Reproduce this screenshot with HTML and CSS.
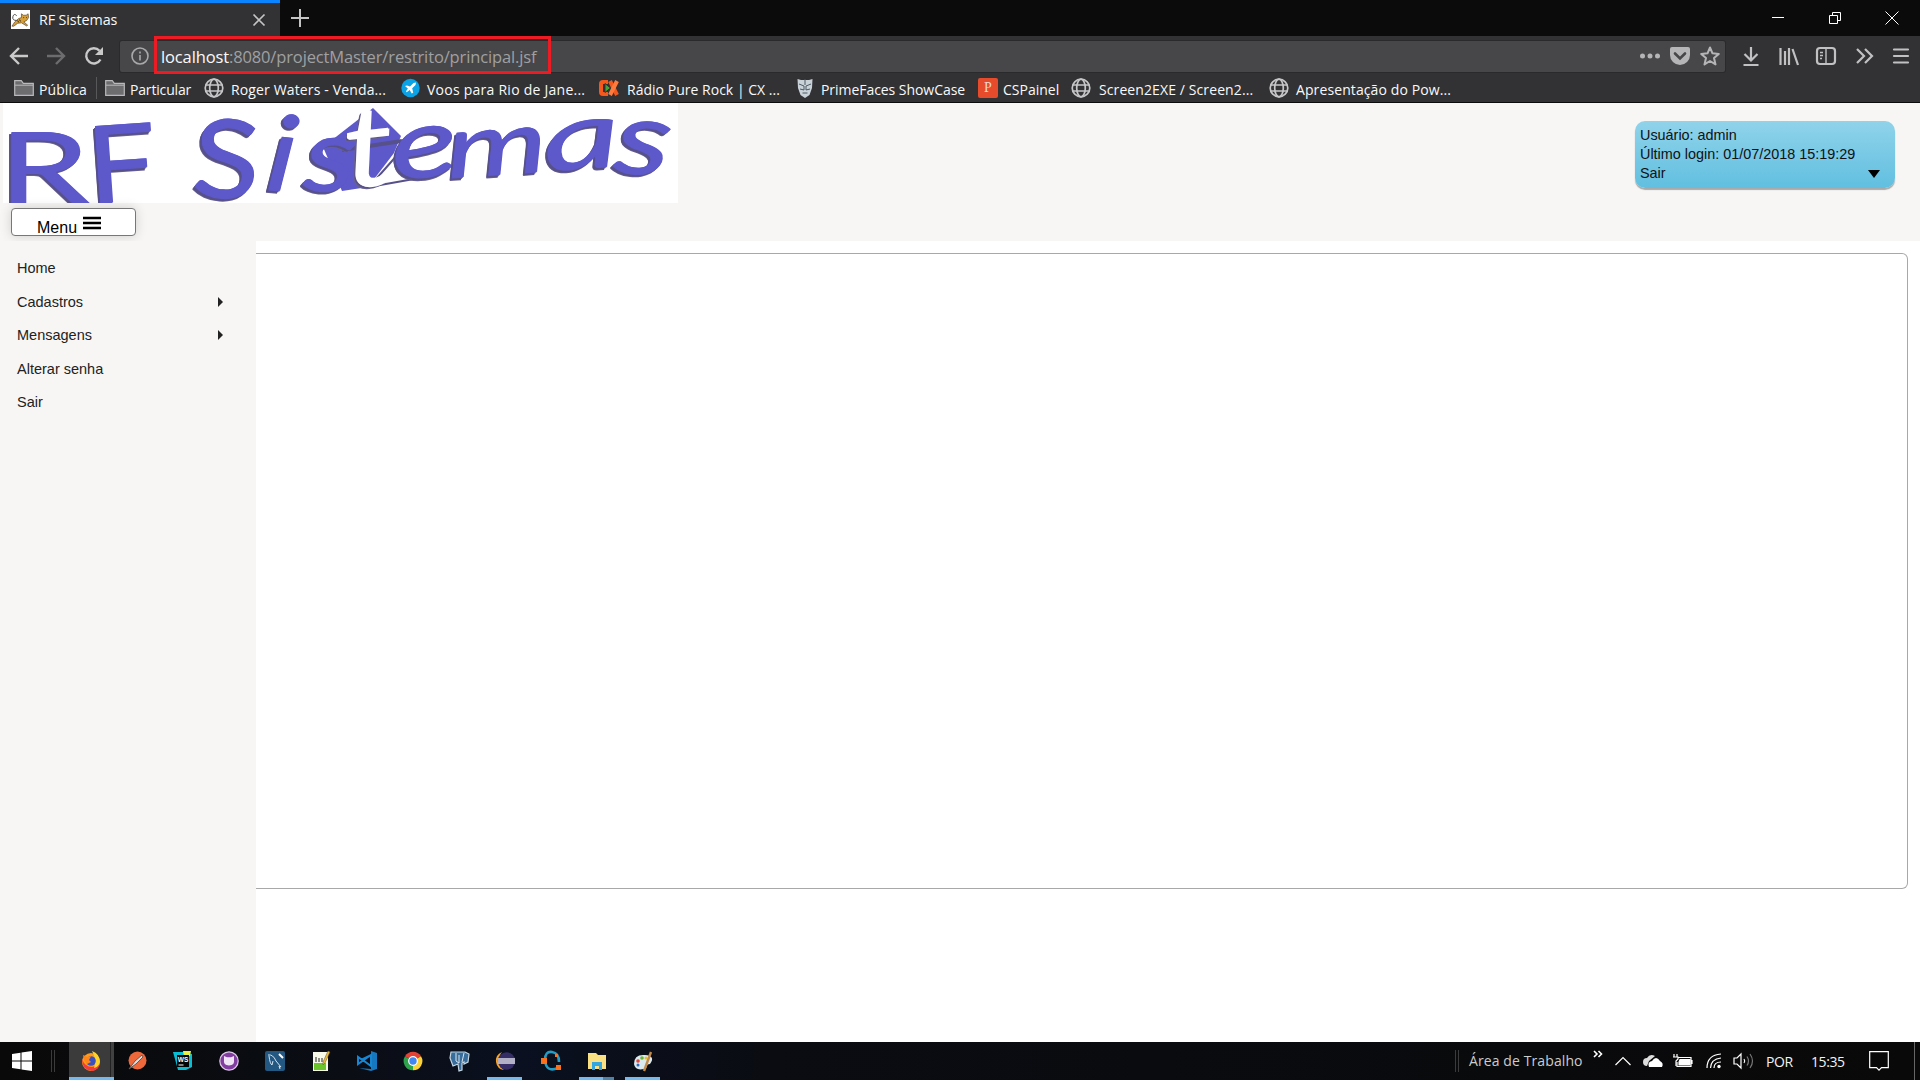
FILE: index.html
```html
<!DOCTYPE html>
<html lang="pt-BR">
<head>
<meta charset="utf-8">
<title>RF Sistemas</title>
<link rel="stylesheet" href="styles.css">
</head>
<body>
<svg class="defs" width="0" height="0" aria-hidden="true">
  <symbol id="globe" viewBox="0 0 20 20"><g fill="none" stroke="#c6c6c8" stroke-width="1.7"><circle cx="10" cy="10" r="8.8"/><ellipse cx="10" cy="10" rx="4.3" ry="8.8"/><path d="M1.5 7h17M1.5 13h17"/></g></symbol>
  <symbol id="folder" viewBox="0 0 20 20"><path d="M.7 17.3V2.7h6.6l2 2.6h10v12z" fill="#6d6d70" stroke="#b9b9bb" stroke-width="1.2"/><path d="M1 7.2h18" stroke="#b9b9bb"/></symbol>
</svg>

<header class="tabs">
  <div class="tab">
    <svg class="favicon" viewBox="0 0 20 20"><path fill="#fff" d="M0 0h20v20H0z"/><path d="M11 4l2 1.500h3L18 4l.5 4-2 3-3 1.500 4 3.500-1 .8-5.500-3.300-4 .5L3 17H1l3-4.500L8 9l3-1z" fill="#d6a03c" stroke="#5c4422" stroke-width=".7"/><path d="M6 11Q1 11 2 7t4-1" stroke="#444" fill="none"/><path d="M13 8h.8m2 0h.8M9 10l1 2m-3-1l1 2" stroke="#2b2116" fill="none"/></svg>
    <span class="tab-title">RF Sistemas</span>
    <svg class="tab-close" viewBox="0 0 14 14"><path d="M1.500 1.500l11 11m0-11l-11 11"/></svg>
  </div>
  <svg class="new-tab" viewBox="0 0 18 18"><path d="M9 0v18M0 9h18"/></svg>
  <div class="window-buttons">
    <svg viewBox="0 0 14 14"><path d="M1 6.500h12"/></svg>
    <svg viewBox="0 0 14 14"><path d="M1.500 4.500h8v8h-8zM4.500 4V1.500h8v8H10"/></svg>
    <svg viewBox="0 0 14 14"><path d="M.5 .5l13 13m0-13l-13 13"/></svg>
  </div>
</header>

<nav class="toolbar">
  <svg class="nav-icon" viewBox="0 0 20 20"><path d="M19 10H2m8-8l-8 8 8 8"/></svg>
  <svg class="nav-icon dim" viewBox="0 0 20 20"><path d="M1 10h17m-8-8l8 8-8 8"/></svg>
  <svg class="nav-icon reload" viewBox="0 0 20 20"><path d="M16.500 13.500A7.600 7.600 0 1 1 15.500 4.800"/><path class="solid" d="M19 1v8h-8z"/></svg>
  <div class="urlbar">
    <svg class="info" viewBox="0 0 18 18"><circle cx="9" cy="9" r="8"/><path d="M9 8v5.500M9 4.500v2"/></svg>
    <div class="address"><span class="host">localhost</span>:8080/projectMaster/restrito/principal.jsf</div>
    <div class="url-actions">
      <svg viewBox="0 0 20 20"><g fill="#b5b5b7"><circle cx="2.500" cy="10" r="2.500"/><circle cx="10" cy="10" r="2.500"/><circle cx="17.500" cy="10" r="2.500"/></g></svg>
      <svg viewBox="0 0 20 20"><path fill="#b5b5b7" d="M2 1h16q2 0 2 2v6a10 10 0 0 1-20 0V3q0-2 2-2z"/><path d="M5 7.500l5 5 5-5" fill="none" stroke="#474749" stroke-width="2.600" stroke-linecap="round"/></svg>
      <svg viewBox="0 0 20 20"><path d="M10 1.500l2.500 5.800 6.300.6-4.800 4.200 1.500 6.300L10 15l-5.500 3.400L6 12.100 1.200 7.900l6.300-.6z" fill="none" stroke="#b5b5b7" stroke-width="2" stroke-linejoin="round"/></svg>
    </div>
  </div>
  <div class="tools">
    <svg viewBox="0 0 20 20"><path d="M10 1v13M3.500 8l6.500 6.500L16.500 8M2.500 19h15"/></svg>
    <svg viewBox="0 0 20 20"><path d="M1.500 2v17M6 5v14M10 2v17M13.500 3l5.500 16" /></svg>
    <svg viewBox="0 0 20 20"><rect x="1" y="2" width="18" height="16" rx="3"/><path d="M10 2v16M4 6.500h3M4 9.500h3M4 12.500h2" stroke-width="1.400"/></svg>
    <svg viewBox="0 0 20 20"><path d="M3 3l7 7-7 7M11 3l7 7-7 7"/></svg>
    <svg viewBox="0 0 20 20"><path d="M3 3.500h14M3 10h14M3 16.500h14" stroke-linecap="round"/></svg>
  </div>
</nav>

<nav class="bookmarks">
  <a class="bm publica"><svg viewBox="0 0 20 20"><use href="#folder"/></svg><span>Pública</span></a>
  <a class="bm particular"><svg viewBox="0 0 20 20"><use href="#folder"/></svg><span>Particular</span></a>
  <a class="bm roger"><svg viewBox="0 0 20 20"><use href="#globe"/></svg><span>Roger Waters - Venda...</span></a>
  <a class="bm voos"><svg viewBox="0 0 20 20"><circle cx="9.500" cy="10" r="9.200" fill="#0ba3e6"/><path d="M4 8l2-.5 3 1L12.500 5l2.500-.5-.5 2.500-3.300 3.300 1 4.500-1.500.7-2-3.500-3 2.200-.8-.8 2-3z" fill="#fff"/></svg><span>Voos para Rio de Jane...</span></a>
  <a class="bm radio"><svg viewBox="0 0 20 20"><path d="M9 4H4Q2 4 2 6v8q0 2 2 2h5" fill="none" stroke="#f4581c" stroke-width="4"/><path d="M11 3l7 14" stroke="#f4581c" stroke-width="4"/><path d="M18 3l-7 14" stroke="#ff7a3c" stroke-width="4"/><path d="M6 5.500l5.500 4.500L6 14.500z" fill="#47a332" stroke="#323234"/></svg><span>Rádio Pure Rock | CX ...</span></a>
  <a class="bm prime"><svg viewBox="0 0 20 20"><path d="M1.500 1l3.500 1h8l3.500-1-.5 9-2.500 7-4.500 3-4.500-3L2 10z" fill="#c9d2d9"/><path d="M3 6l5 2v4L4 11m11-5l-5 2v4l4-1M9 1v6M6.500 15h5" stroke="#4b5963" fill="none"/></svg><span>PrimeFaces ShowCase</span></a>
  <a class="bm painel"><b class="p-icon">P</b><span>CSPainel</span></a>
  <a class="bm screen"><svg viewBox="0 0 20 20"><use href="#globe"/></svg><span>Screen2EXE / Screen2...</span></a>
  <a class="bm apres"><svg viewBox="0 0 20 20"><use href="#globe"/></svg><span>Apresentação do Pow...</span></a>
</nav>

<div class="page">
  <header class="page-header">
    <div class="brand">
      <svg class="logo" viewBox="0 0 675 100" role="img" aria-label="RF Sistemas">
        <path d="M370 5l28 28-7 17-26 34-26 4-19-44z" fill="#5d59cb"/>
        <path d="M396 50L366 84l45-8" fill="none" stroke="#57518a" stroke-width="2"/>
        <path d="M339 47l60-9" stroke="#57518a" stroke-width="4"/>
        <g class="logo-text">
          <text class="upright" transform="translate(-5 100) scale(1.48 1)" font-size="99">R</text>
          <text class="upright" transform="translate(86 101) rotate(-4) scale(1.15 1)" font-size="108">F</text>
          <text class="upright" transform="translate(187 92) rotate(4) scale(1.14 1)" font-size="109">S</text>
          <text transform="translate(261 86) rotate(6) scale(1.2 1)" font-size="106">i</text>
          <text transform="translate(299 86) rotate(4) scale(1.25 1)" font-size="104">s</text>
          <text class="cross" transform="translate(344 85) rotate(-6) scale(1.25 1)" font-size="112">t</text>
          <text transform="translate(390 76) rotate(-4) scale(1.42 1)" font-size="98">e</text>
          <text transform="translate(445 75) rotate(-4) scale(1.46 1)" font-size="88">m</text>
          <text transform="translate(542 68) rotate(-4) scale(1.6 1)" font-size="94">a</text>
          <text transform="translate(609 68) rotate(6) scale(1.36 1)" font-size="104">s</text>
        </g>
      </svg>
      <button class="menu-button"><span>Menu</span><svg viewBox="0 0 18 14"><path d="M0 2h18M0 7h18M0 12h18"/></svg></button>
    </div>
    <div class="user-box">
      <div>Usuário: admin</div>
      <div>Último login: 01/07/2018 15:19:29</div>
      <div class="user-exit">Sair <i class="caret"></i></div>
    </div>
  </header>
  <div class="body">
    <aside class="sidebar">
      <a>Home</a>
      <a>Cadastros<i class="sub"></i></a>
      <a>Mensagens<i class="sub"></i></a>
      <a>Alterar senha</a>
      <a>Sair</a>
    </aside>
    <main class="main"><section class="panel"></section></main>
  </div>
</div>

<footer class="taskbar">
  <svg class="start" viewBox="0 0 20 20"><path fill="#fff" d="M0 3l8.500-1.200v7.700H0zM9.500 1.600L20 0v9.500H9.500zM0 10.500h8.500v7.700L0 17zM9.500 10.500H20V20L9.500 18.400z"/></svg>
  <i class="grip"></i>
  <div class="apps">
    <div class="app active"><svg viewBox="0 0 20 20"><circle cx="10" cy="11" r="9" fill="#ff9b18"/><path d="M1 8q0 11 10 12 8-1 8-10-2 5-8 6-7 0-10-8z" fill="#f23b3e"/><path d="M11 0q8 3 8 11-1 5-6 6 3-8-2-17z" fill="#ffd32e"/><circle cx="10" cy="10" r="4.800" fill="#3a51bd"/><path d="M2 4l4 2 4-1-2 4 2 2-4 2-3-4z" fill="#ff861b"/></svg></div>
    <div class="app"><svg viewBox="0 0 20 20"><circle cx="10.500" cy="9.500" r="9" fill="#ef683c"/><path d="M2 18l6-8 7-6 1 2-7 7z" fill="#ddd" stroke="#70564d"/></svg></div>
    <div class="app"><svg viewBox="0 0 20 20"><path d="M0 1h10l9 2v13l-6 3H5z" fill="#08bed5"/><path d="M10 0h8l-1 5h-6z" fill="#eaf146"/><path d="M4 4h12v12H4z" fill="#050505"/><text x="4.800" y="10.500" font-size="6.500" font-weight="700" fill="#fff" font-family="Liberation Sans" stroke="none">WS</text><path d="M5.500 14h5" stroke="#fff"/></svg></div>
    <div class="app"><svg viewBox="0 0 20 20"><circle cx="10" cy="10" r="9.200" fill="#823da0" stroke="#dcc9e5" stroke-width="1.200"/><path d="M5 5l3 1.300h4L15 5v4q1 5-5 5.500Q4 14 5 9z" fill="#efe4f4"/></svg></div>
    <div class="app"><svg viewBox="0 0 20 20"><rect width="20" height="20" rx="2" fill="#235883"/><path d="M3 4q5-1 8 6l5 6-2-1 1 3M4 5q1 8 3 9l1-4" fill="none" stroke="#d5e4ef"/><path d="M14 3l4 4" stroke="#fff" stroke-width="2"/></svg></div>
    <div class="app"><svg viewBox="0 0 20 20"><path d="M2 1h15v19H2z" fill="#f7f9e9"/><path d="M3 12h12v7H3z" fill="#6cc52c"/><path d="M5 6v5m3-4v4m3-4v4" stroke="#222"/><path d="M19 1l-5 11-2 2 0-3 5-11z" fill="#e6bd39" stroke="#704c24" stroke-width=".5"/></svg></div>
    <div class="app"><svg viewBox="0 0 20 20"><path d="M14 0l6 2v16l-6 2L2 17l12 1z" fill="#1678be"/><path d="M1 6v7l5-3.500zM14 4v11L5 8.500zM1 13l13-9" fill="none" stroke="#1787d3" stroke-width="2"/></svg></div>
    <div class="app"><svg viewBox="0 0 20 20"><path d="M10 10L2 5.300a9.200 9.200 0 0 1 16 0z" fill="#e44234"/><path d="M10 10l8-4.700a9.200 9.200 0 0 1-8 14z" fill="#fbd338"/><path d="M10 10v9.300A9.200 9.200 0 0 1 2 5.300z" fill="#2da34c"/><circle cx="10" cy="10" r="4.300" fill="#4287f1" stroke="#fff" stroke-width="1.200"/></svg></div>
    <div class="app"><svg viewBox="0 0 20 20"><path d="M2 1l7 0 7 0 4 2-1 8-4 2v-2l-2 1v7l-3 1-1-7-5 2L1 7z" fill="#376c9b" stroke="#c6d6e2" stroke-width="1.200"/><path d="M7 2v8l3 2V4m5-2l-2 9" stroke="#dde7ee" fill="none"/></svg></div>
    <div class="app open"><svg viewBox="0 0 20 20"><path d="M7 1Q0 4 1 11t8 8Q4 16 4 10T7 1z" fill="#f6a42c"/><circle cx="11.500" cy="10" r="8.700" fill="#352d65"/><path d="M3 8h17M3 10h17M3 12h17" stroke="#dcdbe8" stroke-width="1.400"/></svg></div>
    <div class="app"><svg viewBox="0 0 20 20"><path d="M4 9Q4 0 11 1t7 10m-1 6Q5 22 4 9" fill="none" stroke="#239cc6" stroke-width="2.600"/><path d="M0 7h6v6H0zM14 3h3v3h-3zM15 14h5v5h-5z" fill="#fa711d"/></svg></div>
    <div class="app open multi"><svg viewBox="0 0 20 20"><path d="M1 2h8l2 2h8v14H1z" fill="#fbdf83"/><path d="M5 19v-8h10v8h-3v-4H8v4z" fill="#33a5df"/></svg></div>
    <div class="app open"><svg viewBox="0 0 20 20"><path d="M1 13Q1 3 12 4t5 9q-3 0-3 2t-3 3q-9 2-10-5z" fill="#dce9ef"/><circle cx="5" cy="10" r="1.800" fill="#e2463a"/><circle cx="9" cy="7" r="1.800" fill="#66b52d"/><circle cx="5" cy="14" r="1.500" fill="#286fc4"/><circle cx="13" cy="7" r="1.500" fill="#e8bd28"/><path d="M18 1L11 20" stroke="#c18a4b" stroke-width="2.400"/></svg></div>
  </div>
  <div class="tray">
    <i class="grip"></i>
    <span class="desk">Área de Trabalho</span>
    <svg class="more" viewBox="0 0 10 8"><path d="M1 1l3 3-3 3M5.500 1l3 3-3 3"/></svg>
    <svg class="up" viewBox="0 0 16 10"><path d="M.5 9L8 1.500 15.500 9"/></svg>
    <svg class="cloud" viewBox="0 0 20 14"><path fill="#ddd" d="M4 12a4 4 0 0 1 0-8Q7-1 12 2l-6 5z"/><path fill="#fff" d="M6 13q-2-5 3-6 4-6 8 0 4 2 2 6z"/></svg>
    <svg class="battery" viewBox="0 0 20 14"><path d="M5 3.500h13v9H4V8M19 6v4" /><path d="M7 5.500h10v5.500H6V8z" fill="#fff"/><path d="M1 0v3m3-3v3M0 3h5v2l-2 2v5" /></svg>
    <svg class="wifi" viewBox="0 0 16 16"><path d="M1 15Q1 2 15 1M4.500 15Q5 6 15 5M8 15q0-6 7-6"/><circle cx="13" cy="13.500" r="1.700" fill="#fff" stroke="none"/></svg>
    <svg class="sound" viewBox="0 0 20 16"><path d="M1 5h3l4-4v14l-4-4H1zM11 6q1.500 2 0 4"/><path d="M14 3.500q3 4.500 0 9M17 1q5 7 0 14" opacity=".45"/></svg>
    <span class="lang">POR</span>
    <span class="clock">15:35</span>
    <svg class="action" viewBox="0 0 20 20"><path d="M.7.700h18.600v16H12.500L10 19.200 7.500 16.700H.7z"/></svg>
    <i class="peek"></i>
  </div>
</footer>
<div class="highlight"></div>
</body>
</html>
```
FILE: styles.css
```css
* { box-sizing: border-box; }
html, body { margin: 0; height: 100%; overflow: hidden; }
body { display: flex; flex-direction: column; background: #fff; font-family: "Open Sans", "Noto Sans", sans-serif; }
svg { display: block; flex: none; overflow: visible; }
.defs { position: absolute; }

/* Browser chrome */
.tabs { flex: none; height: 36px; display: flex; align-items: center; background: #0b0b0b; }
.tab { width: 280px; height: 36px; display: flex; align-items: center; border-top: 3px solid #0a84ff; background: #323234; padding: 0 14px 0 11px; }
.favicon { width: 19px; height: 19px; }
.tab-title { flex: 1; margin-left: 9px; color: #f9f9fa; font-size: 14.3px; letter-spacing: -.1px; }
.tab-close { width: 14px; height: 14px; fill: none; stroke: #c4c4c5; stroke-width: 1.7; }
.new-tab { width: 18px; height: 18px; margin-left: 11px; fill: none; stroke: #c4c4c5; stroke-width: 2; }
.window-buttons { margin-left: auto; display: flex; gap: 43px; padding-right: 21px; }
.window-buttons svg { width: 14px; height: 14px; fill: none; stroke: #fff; stroke-width: 1; }

.toolbar { flex: none; height: 38px; display: flex; align-items: center; background: #323234; padding: 2px 9px 0; }
.nav-icon { width: 20px; height: 20px; margin-right: 17px; fill: none; stroke: #c9c9ca; stroke-width: 2.4; }
.nav-icon.dim { stroke: #6c6c6e; margin-right: 18px; }
.nav-icon.reload { margin-right: 16px; }
.nav-icon .solid { fill: #c9c9ca; stroke: none; }
.urlbar { flex: none; width: 1605px; height: 31px; display: flex; align-items: center; background: #474749; border-radius: 2px; box-shadow: 0 0 0 1px #2a2a2c; padding: 0 5px 0 11px; }
.info { width: 18px; height: 18px; fill: none; stroke: #a9a9ab; stroke-width: 1.6; }
.address { flex: 1; margin-left: 12px; color: #a0a0a2; font-size: 16.5px; letter-spacing: -.13px; }
.host { color: #f9f9fa; }
.url-actions { display: flex; gap: 10px; }
.url-actions svg { width: 20px; height: 20px; }
.tools { display: flex; gap: 17.6px; margin-left: 16px; }
.tools svg { width: 20px; height: 20px; fill: none; stroke: #c1c1c3; stroke-width: 2.2; }

.bookmarks { flex: none; height: 29px; display: flex; align-items: center; background: #323234; border-bottom: 1px solid #0c0c0d; padding-left: 14px; color: #f9f9fa; font-size: 14px; }
.bm { display: flex; flex: none; align-items: center; gap: 6px; white-space: nowrap; height: 22px; }
.bm span { padding-top: 2px; }
.bm svg { width: 20px; height: 20px; }
.publica { width: 83px; gap: 5px; border-right: 1px solid #58585a; letter-spacing: .1px; }
.particular { width: 99px; margin-left: 8px; gap: 5px; letter-spacing: -.17px; }
.bm.roger { width: 197px; gap: 7px; letter-spacing: .14px; }
.bm.voos { width: 198px; letter-spacing: .25px; }
.bm.radio { width: 197px; gap: 8px; letter-spacing: .02px; }
.bm.prime { width: 182px; gap: 5px; letter-spacing: -.05px; }
.bm.painel { width: 93px; gap: 5px; letter-spacing: 0; }
.bm.screen { width: 198px; gap: 8px; letter-spacing: .1px; }
.bm.apres { gap: 7px; letter-spacing: .1px; }
.p-icon { width: 20px; height: 20px; background: #e64b2c; color: #f5d5ce; border-radius: 2px; font: 14px/20px "Liberation Serif", serif; text-align: center; }

/* Application page */
.page { flex: 1; min-height: 0; display: flex; flex-direction: column; font-family: "Liberation Sans", Arial, sans-serif; }
.page-header { flex: none; height: 138px; display: flex; justify-content: space-between; background: #f7f6f5; padding: 0 25px 0 3px; overflow: hidden; }
.logo { width: 675px; height: 100px; background: #fff; overflow: hidden; }
.logo-text { font-family: Lato, "Open Sans", sans-serif; font-weight: 400; font-style: italic; fill: #5d59cb; text-shadow: .6px 0 #5d59cb, 0 1px #5d59cb, -1px 2px #57518a, -2px 3px #57518a, -2px 4px #686292; }
.upright { font-style: normal; }
.cross { fill: #fff; text-shadow: 1px 1px #fff, -1px 2px #57518a, -2px 3px #686292; }
.menu-button { display: flex; align-items: flex-end; gap: 6px; width: 125px; height: 28px; margin: 5px 0 0 8px; padding: 0 0 0 25px; background: #fff; border: 1px solid #777; border-radius: 4px; box-shadow: 0 0 12px rgba(0,0,0,.16); font: 16px/16px "Liberation Sans", Arial, sans-serif; color: #000; }
.menu-button span { margin-bottom: -1px; }
.menu-button svg { width: 18px; height: 14px; margin-bottom: 5px; stroke: #000; stroke-width: 2.5; }
.user-box { width: 260px; height: 67px; margin-top: 18px; padding: 5px 5px 0; border-radius: 10px; background: linear-gradient(#90d3ea, #61bfe0); box-shadow: 0 2px 1px #aaa; font-size: 14.4px; line-height: 19px; color: #111; }
.user-exit { display: flex; justify-content: space-between; align-items: center; padding-right: 10px; }
.caret { border: 6.500px solid transparent; border-top: 8px solid #000; border-bottom: 0; }
.body { flex: 1; min-height: 0; display: flex; }
.sidebar { width: 256px; background: #f7f6f5; padding: 10.4px 33px 0 17px; }
.sidebar a { display: flex; align-items: center; justify-content: space-between; height: 33.5px; font-size: 14.5px; color: #222; }
.sub { border: 5px solid transparent; border-left: 5px solid #222; border-right: 0; }
.main { flex: 1; background: #fff; padding: 12px 12px 0 0; }
.panel { height: 636px; border: 1px solid #a8a8a8; border-left: 0; border-radius: 0 6px 6px 0; }

/* Desktop taskbar */
.taskbar { flex: none; height: 38px; display: flex; align-items: center; background: linear-gradient(90deg, #090909, #0a0d14 18%, #0a1020 27%, #0a0c12 40%, #090909); padding-left: 12px; }
.start { width: 20px; height: 20px; }
.grip { width: 4px; height: 22px; border: solid #3b3b3b; border-width: 0 1px; }
.start + .grip { margin-left: 19px; }
.apps { display: flex; margin-left: 14px; height: 38px; gap: 1px; }
.app { width: 45px; height: 38px; display: flex; align-items: center; justify-content: center; padding-right: 1px; }
.app svg { width: 20px; height: 20px; }
.app.active { background: linear-gradient(90deg, #3b3b3b 41px, #222 41px 42px, #414141 42px); box-shadow: inset 0 -3px #76b9ed; }
.app.open { background: linear-gradient(#76b9ed, #76b9ed) 4px bottom / 35px 3px no-repeat; }
.app.multi { background: linear-gradient(90deg, #76b9ed 24px, #5183a9 24px) 4px bottom / 35px 3px no-repeat; }
.tray { margin-left: auto; width: 465px; height: 38px; display: flex; align-items: center; color: #f2f2f2; font-size: 14px; }
.tray svg { fill: none; stroke: #fff; stroke-width: 1.2; }
.desk { width: 114px; margin-left: 10px; color: #ccc; letter-spacing: .1px; white-space: nowrap; padding-bottom: 1px; }
.tray .more { width: 10px; height: 8px; margin: -14px 0 0 10px; stroke-width: 1.6; }
.up { width: 16px; height: 10px; margin-left: 12px; }
.tray .cloud { width: 20px; height: 14px; margin-left: 12px; stroke: none; }
.battery { width: 20px; height: 14px; margin-left: 10px; }
.wifi { width: 16px; height: 16px; margin-left: 13px; }
.sound { width: 20px; height: 16px; margin-left: 11px; }
.lang { width: 28px; margin-left: 13px; letter-spacing: -.4px; }
.clock { width: 35px; margin-left: 17px; letter-spacing: -.4px; }
.action { width: 20px; height: 20px; margin-left: 23px; }
.peek { width: 1px; height: 38px; margin-left: auto; margin-right: 5px; background: #666; }

/* Annotation frame over the address */
.highlight { position: absolute; left: 154px; top: 36px; width: 397px; height: 38px; border: 3px solid #ed1c24; }
```
